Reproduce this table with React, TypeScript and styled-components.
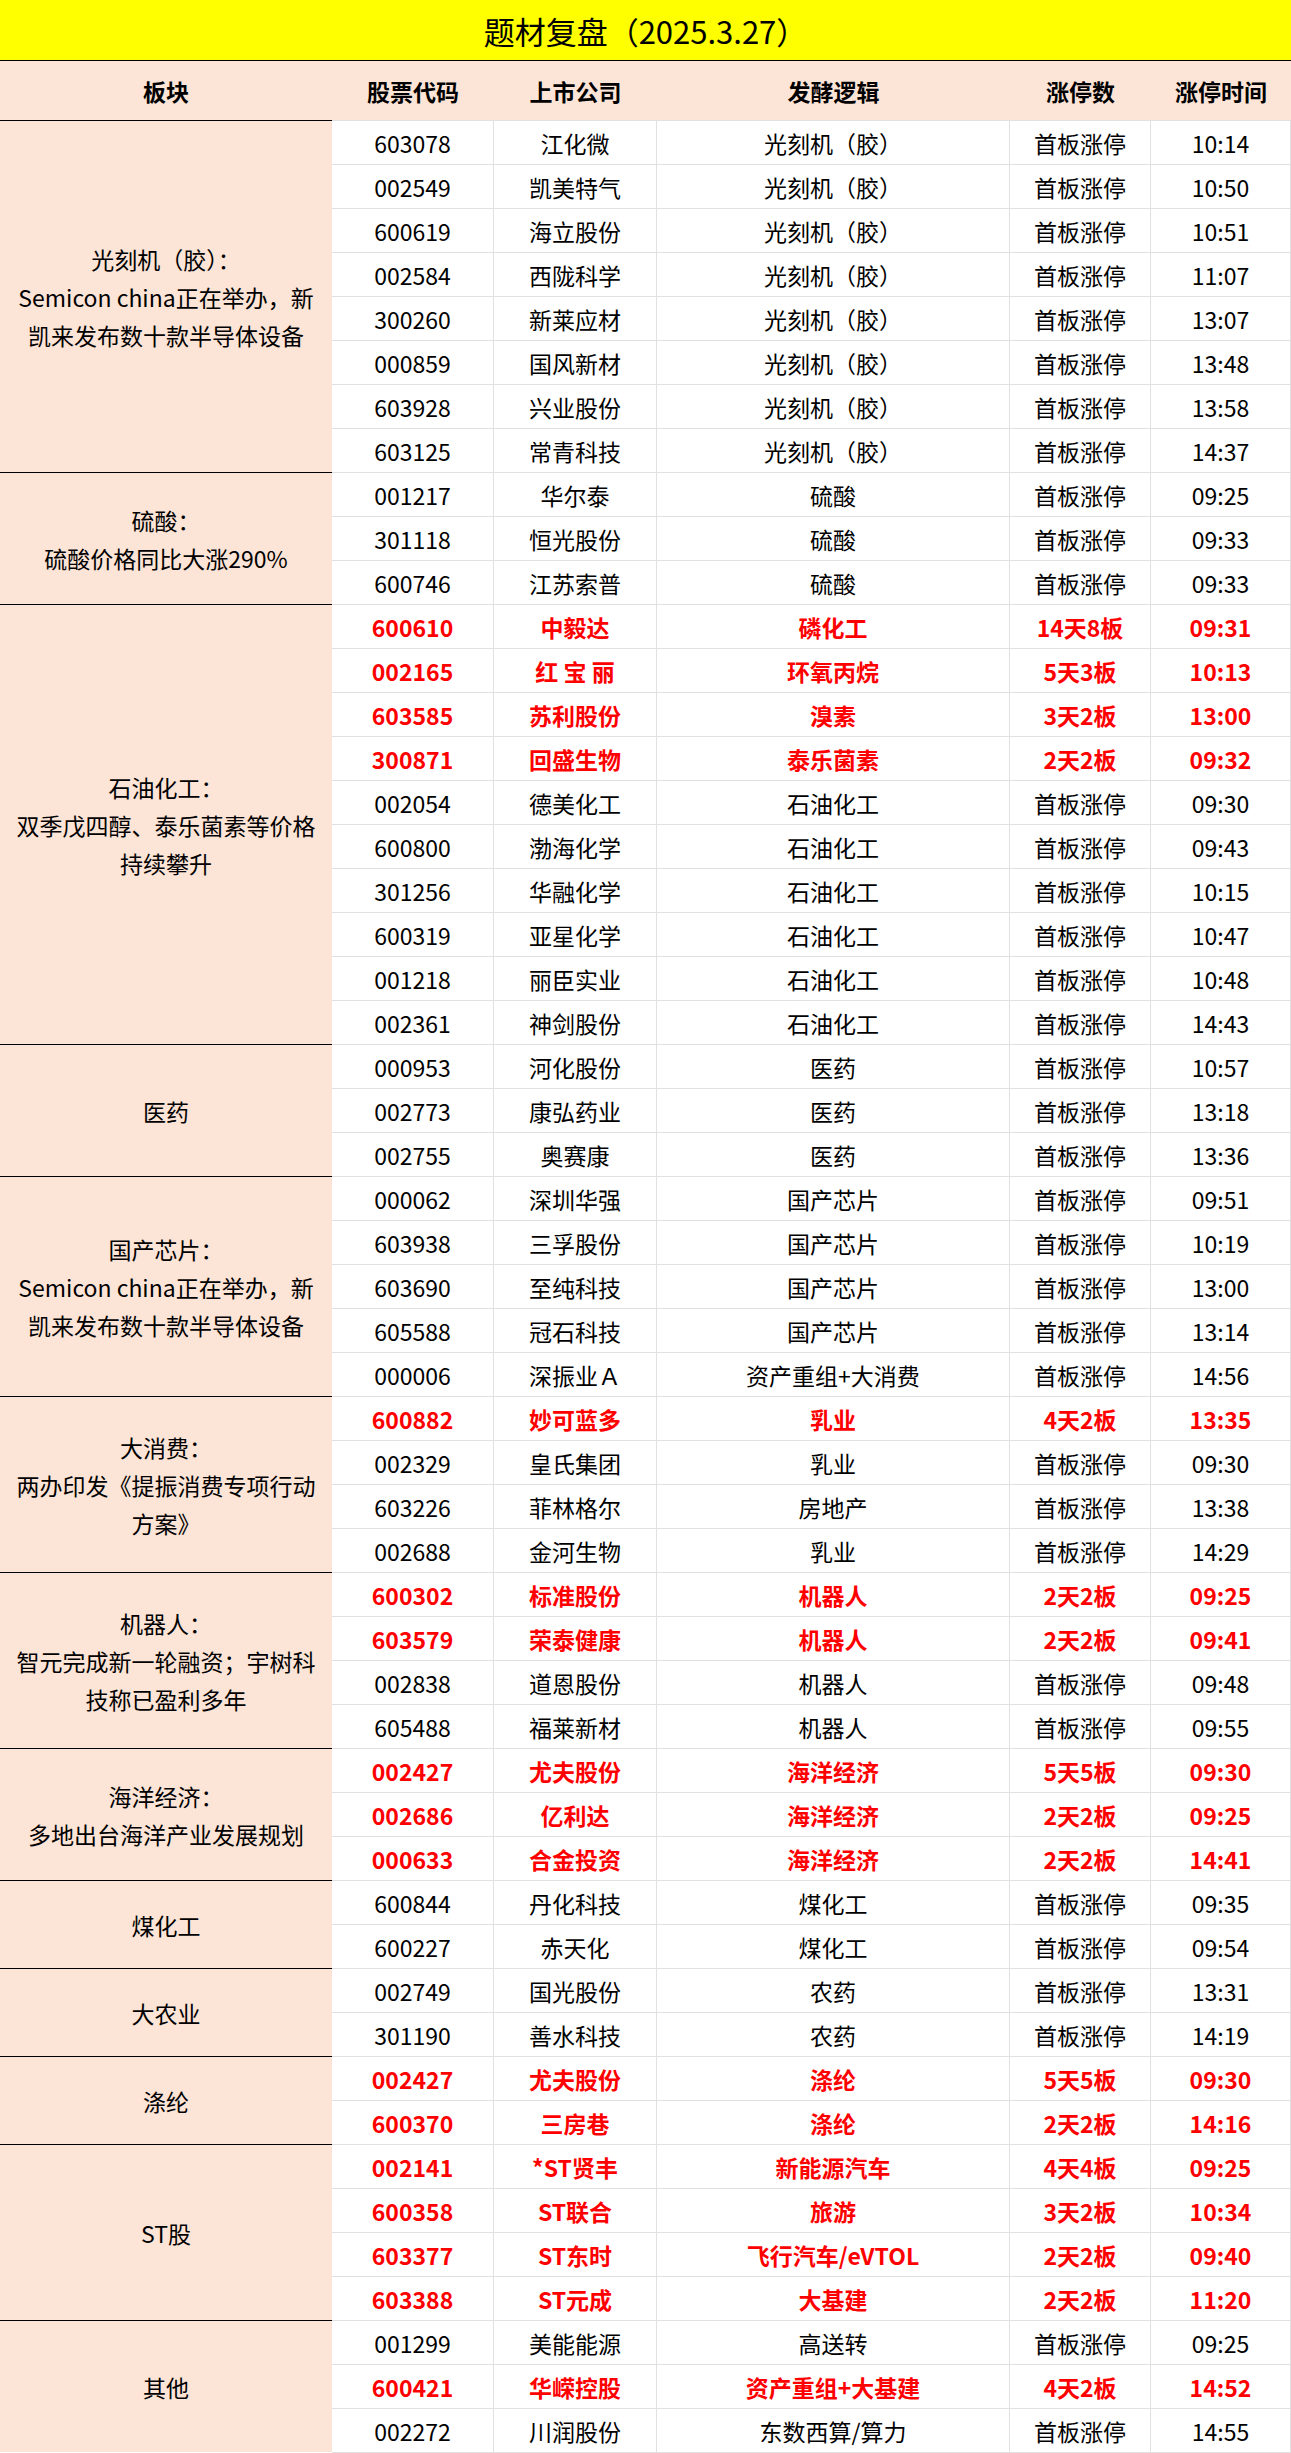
import React from 'react';
import styled, { createGlobalStyle } from 'styled-components';

type Row = [string, string, string, string, string, boolean?];

type Group = {
  label: string[];
  rows: Row[];
};

const LIMIT = '首板涨停';

const groups: Group[] = [
  {
    label: ['光刻机（胶）：', 'Semicon china正在举办，新', '凯来发布数十款半导体设备'],
    rows: [
      ['603078', '江化微', '光刻机（胶）', LIMIT, '10:14'],
      ['002549', '凯美特气', '光刻机（胶）', LIMIT, '10:50'],
      ['600619', '海立股份', '光刻机（胶）', LIMIT, '10:51'],
      ['002584', '西陇科学', '光刻机（胶）', LIMIT, '11:07'],
      ['300260', '新莱应材', '光刻机（胶）', LIMIT, '13:07'],
      ['000859', '国风新材', '光刻机（胶）', LIMIT, '13:48'],
      ['603928', '兴业股份', '光刻机（胶）', LIMIT, '13:58'],
      ['603125', '常青科技', '光刻机（胶）', LIMIT, '14:37'],
    ],
  },
  {
    label: ['硫酸：', '硫酸价格同比大涨290%'],
    rows: [
      ['001217', '华尔泰', '硫酸', LIMIT, '09:25'],
      ['301118', '恒光股份', '硫酸', LIMIT, '09:33'],
      ['600746', '江苏索普', '硫酸', LIMIT, '09:33'],
    ],
  },
  {
    label: ['石油化工：', '双季戊四醇、泰乐菌素等价格', '持续攀升'],
    rows: [
      ['600610', '中毅达', '磷化工', '14天8板', '09:31', true],
      ['002165', '红 宝 丽', '环氧丙烷', '5天3板', '10:13', true],
      ['603585', '苏利股份', '溴素', '3天2板', '13:00', true],
      ['300871', '回盛生物', '泰乐菌素', '2天2板', '09:32', true],
      ['002054', '德美化工', '石油化工', LIMIT, '09:30'],
      ['600800', '渤海化学', '石油化工', LIMIT, '09:43'],
      ['301256', '华融化学', '石油化工', LIMIT, '10:15'],
      ['600319', '亚星化学', '石油化工', LIMIT, '10:47'],
      ['001218', '丽臣实业', '石油化工', LIMIT, '10:48'],
      ['002361', '神剑股份', '石油化工', LIMIT, '14:43'],
    ],
  },
  {
    label: ['医药'],
    rows: [
      ['000953', '河化股份', '医药', LIMIT, '10:57'],
      ['002773', '康弘药业', '医药', LIMIT, '13:18'],
      ['002755', '奥赛康', '医药', LIMIT, '13:36'],
    ],
  },
  {
    label: ['国产芯片：', 'Semicon china正在举办，新', '凯来发布数十款半导体设备'],
    rows: [
      ['000062', '深圳华强', '国产芯片', LIMIT, '09:51'],
      ['603938', '三孚股份', '国产芯片', LIMIT, '10:19'],
      ['603690', '至纯科技', '国产芯片', LIMIT, '13:00'],
      ['605588', '冠石科技', '国产芯片', LIMIT, '13:14'],
      ['000006', '深振业Ａ', '资产重组+大消费', LIMIT, '14:56'],
    ],
  },
  {
    label: ['大消费：', '两办印发《提振消费专项行动', '方案》'],
    rows: [
      ['600882', '妙可蓝多', '乳业', '4天2板', '13:35', true],
      ['002329', '皇氏集团', '乳业', LIMIT, '09:30'],
      ['603226', '菲林格尔', '房地产', LIMIT, '13:38'],
      ['002688', '金河生物', '乳业', LIMIT, '14:29'],
    ],
  },
  {
    label: ['机器人：', '智元完成新一轮融资；宇树科', '技称已盈利多年'],
    rows: [
      ['600302', '标准股份', '机器人', '2天2板', '09:25', true],
      ['603579', '荣泰健康', '机器人', '2天2板', '09:41', true],
      ['002838', '道恩股份', '机器人', LIMIT, '09:48'],
      ['605488', '福莱新材', '机器人', LIMIT, '09:55'],
    ],
  },
  {
    label: ['海洋经济：', '多地出台海洋产业发展规划'],
    rows: [
      ['002427', '尤夫股份', '海洋经济', '5天5板', '09:30', true],
      ['002686', '亿利达', '海洋经济', '2天2板', '09:25', true],
      ['000633', '合金投资', '海洋经济', '2天2板', '14:41', true],
    ],
  },
  {
    label: ['煤化工'],
    rows: [
      ['600844', '丹化科技', '煤化工', LIMIT, '09:35'],
      ['600227', '赤天化', '煤化工', LIMIT, '09:54'],
    ],
  },
  {
    label: ['大农业'],
    rows: [
      ['002749', '国光股份', '农药', LIMIT, '13:31'],
      ['301190', '善水科技', '农药', LIMIT, '14:19'],
    ],
  },
  {
    label: ['涤纶'],
    rows: [
      ['002427', '尤夫股份', '涤纶', '5天5板', '09:30', true],
      ['600370', '三房巷', '涤纶', '2天2板', '14:16', true],
    ],
  },
  {
    label: ['ST股'],
    rows: [
      ['002141', '*ST贤丰', '新能源汽车', '4天4板', '09:25', true],
      ['600358', 'ST联合', '旅游', '3天2板', '10:34', true],
      ['603377', 'ST东时', '飞行汽车/eVTOL', '2天2板', '09:40', true],
      ['603388', 'ST元成', '大基建', '2天2板', '11:20', true],
    ],
  },
  {
    label: ['其他'],
    rows: [
      ['001299', '美能能源', '高送转', LIMIT, '09:25'],
      ['600421', '华嵘控股', '资产重组+大基建', '4天2板', '14:52', true],
      ['002272', '川润股份', '东数西算/算力', LIMIT, '14:55'],
    ],
  },
];

const headers = ['板块', '股票代码', '上市公司', '发酵逻辑', '涨停数', '涨停时间'];

const COLUMNS = '332px 162px 163px 353px 141px 140px';
const PINK = '#fce4d6';
const GRID_LINE = '#e1e1e1';

const GlobalStyle = createGlobalStyle`
  html, body {
    margin: 0;
    padding: 0;
    background: #ffffff;
  }
  body {
    font-family: "Noto Sans CJK SC", "Noto Sans", sans-serif;
    color: #000000;
  }
`;

const Sheet = styled.div`
  width: 1291px;
  box-sizing: border-box;
`;

const Title = styled.div`
  align-items: center;
  background: #ffff00;
  border-bottom: 1px solid #000000;
  box-sizing: border-box;
  display: flex;
  font-size: 31px;
  height: 61px;
  justify-content: center;
  padding-top: 1px;
`;

const HeaderRow = styled.div`
  background: ${PINK};
  display: grid;
  grid-template-columns: ${COLUMNS};
  height: 59px;
`;

const HeaderCell = styled.div`
  align-items: center;
  box-sizing: border-box;
  display: flex;
  font-size: 23px;
  font-weight: 700;
  justify-content: center;
`;

const Body = styled.div`
  display: grid;
  grid-auto-rows: 44px;
  grid-template-columns: ${COLUMNS};
`;

const GroupCell = styled.div<{ $span: number }>`
  align-items: center;
  background: ${PINK};
  border-top: 1px solid #000000;
  box-sizing: border-box;
  display: flex;
  flex-direction: column;
  font-size: 23px;
  grid-row: span ${(p) => p.$span};
  justify-content: center;
  line-height: 38px;
  text-align: center;
  white-space: nowrap;
`;

const Cell = styled.div<{ $hot?: boolean }>`
  align-items: center;
  border-right: 1px solid ${GRID_LINE};
  border-top: 1px solid ${GRID_LINE};
  box-sizing: border-box;
  color: ${(p) => (p.$hot ? '#ff0000' : '#000000')};
  display: flex;
  font-size: 23px;
  font-weight: ${(p) => (p.$hot ? 700 : 400)};
  justify-content: center;
  white-space: nowrap;
`;

const BottomLine = styled.div`
  border-top: 1px solid ${GRID_LINE};
  margin-left: 332px;
`;

const App: React.FC = () => {
  return (
    <Sheet>
      <GlobalStyle />
      <Title>题材复盘（2025.3.27）</Title>
      <HeaderRow>
        {headers.map((h) => (
          <HeaderCell key={h}>{h}</HeaderCell>
        ))}
      </HeaderRow>
      <Body>
        {groups.map((g, gi) => (
          <React.Fragment key={gi}>
            <GroupCell $span={g.rows.length}>
              {g.label.map((line) => (
                <span key={line}>{line}</span>
              ))}
            </GroupCell>
            {g.rows.map((r, ri) => (
              <React.Fragment key={ri}>
                {r.slice(0, 5).map((v, ci) => (
                  <Cell key={ci} $hot={!!r[5]}>
                    {v}
                  </Cell>
                ))}
              </React.Fragment>
            ))}
          </React.Fragment>
        ))}
      </Body>
      <BottomLine />
    </Sheet>
  );
};

export default App;
